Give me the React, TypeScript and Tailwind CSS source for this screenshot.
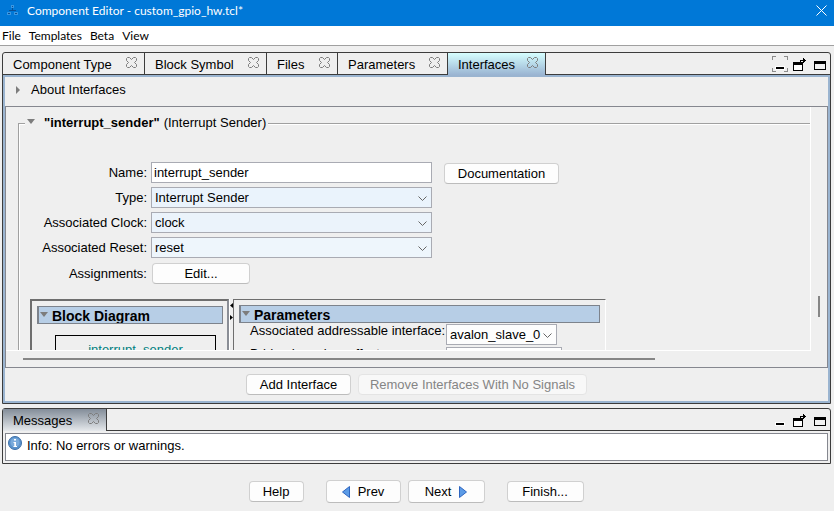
import type { ReactNode } from "react";

function AppIcon() {
  return (
    <svg width="12" height="13" viewBox="0 0 12 13" shapeRendering="crispEdges" aria-hidden="true">
      <path d="M5 5h1v3H5zM2 7h7v1H2z" fill="#0b4f94" />
      <path d="M4 2h3v3H4zM0 9h4v3H0zM7 9h4v3H7z" fill="#3a97e2" />
      <path d="M5 3h1v1H5zM1 10h2v1H1zM8 10h2v1H8z" fill="#0b4f94" />
    </svg>
  );
}

function CloseMark() {
  return (
    <svg width="11" height="11" viewBox="0 0 11 11" fill="none" stroke="#7c7c7c" aria-hidden="true">
      <path d="M1.500.5h2l2 2 2-2h2l1 1v2l-2 2 2 2v2l-1 1h-2l-2-2-2 2h-2l-1-1v-2l2-2-2-2v-2z" />
    </svg>
  );
}

function PanelTools({ focused }: { focused?: boolean }) {
  return (
    <div className="ml-auto flex items-start gap-[5px] pt-[3px] pr-1">
      <button aria-label="Minimize">
        <svg width="16" height="16" viewBox="0 0 16 16" shapeRendering="crispEdges">
          {focused && <path d="M.5 4V.5H4M12 .5h3.500V4M15.500 12v3.500H12M4 15.500H.5V12" fill="none" stroke="#8a8a8a" />}
          <rect x="3" y="10" width="10" height="4" fill="#fff" />
          <rect x="4" y="11" width="8" height="2" fill="#000" />
        </svg>
      </button>
      <button aria-label="Detach">
        <svg width="16" height="16" viewBox="0 0 16 16" shapeRendering="crispEdges">
          <path d="M.5 6.500h9v8h-9z" fill="#fff" stroke="#000" />
          <path d="M0 6h10v3H0zM7 4h4v1H8v2H7zM10 2h1v1h1v1h1v1h-1v1h-1v1h-1z" fill="#000" />
        </svg>
      </button>
      <button aria-label="Maximize">
        <svg width="12" height="16" viewBox="0 0 12 16" shapeRendering="crispEdges">
          <path d="M.5 5.500h11v8H.5z" fill="#f2f2f2" stroke="#000" />
          <path d="M0 5h12v3H0z" fill="#000" />
        </svg>
      </button>
    </div>
  );
}

function Tri() {
  return (
    <svg width="8" height="5" viewBox="0 0 8 5" aria-hidden="true">
      <path d="M0 0h8L4 5z" fill="#7d7d7d" />
    </svg>
  );
}

function Btn({ children, className = "", disabled }: { children: ReactNode; className?: string; disabled?: boolean }) {
  return (
    <button
      disabled={disabled}
      className={`flex shrink-0 items-center justify-center whitespace-nowrap rounded-[4px] border border-[#d0d0d0] border-b-[#bcbcbc] bg-[#fdfdfd] disabled:border-[#e4e4e4] disabled:bg-[#f8f8f8] disabled:text-[#858585] ${className}`}
    >
      {children}
    </button>
  );
}

function Combo({ id, value, className = "" }: { id: string; value: string; className?: string }) {
  return (
    <div className={`relative h-[21px] shrink-0 ${className}`}>
      <select id={id} className="block h-full w-full appearance-none border border-[#a9abb3] bg-transparent pl-[3px] outline-none">
        <option>{value}</option>
      </select>
      <svg className="pointer-events-none absolute top-[9px] right-[5px]" width="9" height="6" viewBox="0 0 9 6" fill="none" stroke="#666">
        <path d="M.5.5l4 4 4-4" />
      </svg>
    </div>
  );
}

function Tab({ children, className }: { children: ReactNode; className: string }) {
  return (
    <button role="tab" className={`flex items-center justify-between border-r border-[#3c3c3c] pr-[7px] pl-[10px] ${className}`}>
      <span className="pt-[2px]">{children}</span>
      <span className="-mt-[2px]">
        <CloseMark />
      </span>
    </button>
  );
}

function SectionHeader({ children }: { children: ReactNode }) {
  return (
    <h3 className="flex h-[18px] items-start overflow-hidden border border-l-2 border-[#7d838c] bg-[#b7cee6] text-sm leading-[18px] font-bold">
      <span className="mt-[5px] ml-px flex w-3">
        <Tri />
      </span>
      {children}
    </h3>
  );
}

function Row({ label, id, children }: { label: string; id: string; children: ReactNode }) {
  return (
    <div className="flex h-[21px] items-center gap-1">
      <label htmlFor={id} className="w-32 shrink-0 text-right">
        {label}
      </label>
      {children}
    </div>
  );
}

export default function App() {
  return (
    <div className="flex h-screen flex-col overflow-hidden bg-[#efefef] font-['Liberation_Sans',Arial,sans-serif] text-[13px] leading-[16px] text-black">
      <header className="flex h-[26px] shrink-0 items-start bg-[#0078d7] pt-[3px] pr-[7px] pl-[7px] font-['Lato','Open_Sans',sans-serif] text-xs leading-4 text-white">
        <AppIcon />
        <h1 className="ml-2">Component Editor - custom_gpio_hw.tcl*</h1>
        <button aria-label="Close" className="mt-[2px] ml-auto">
          <svg width="11" height="11" viewBox="0 0 11 11" stroke="#fff">
            <path d="M.5.5l10 10M10.500.5l-10 10" />
          </svg>
        </button>
      </header>
      <nav className="flex h-5 shrink-0 items-center gap-2 border-b border-[#a0a0a0] bg-white pl-[2px] font-['Lato','Open_Sans',sans-serif] text-xs">
        <button>File</button>
        <button>Templates</button>
        <button>Beta</button>
        <button>View</button>
      </nav>

      <main className="mt-[6px] mr-[3px] ml-[2px] flex min-h-0 flex-1 flex-col rounded-t-[3px] border border-[#3c3c3c]">
        <div role="tablist" className="flex h-[22px] shrink-0 border-b border-[#3c3c3c]">
          <Tab className="w-[142px]">Component Type</Tab>
          <Tab className="w-[122px]">Block Symbol</Tab>
          <Tab className="w-[71px]">Files</Tab>
          <Tab className="w-[110px]">Parameters</Tab>
          <Tab className="-mb-px w-[98px] bg-linear-to-b from-[#d6ffff] to-[#9ab4d2] pb-px">Interfaces</Tab>
          <PanelTools focused />
        </div>
        <div className="flex min-h-0 flex-1 flex-col border-2 border-[#9ab4d0]">
          <button className="flex h-[29px] shrink-0 items-center gap-[11px] pb-1 pl-[11px] text-left">
            <svg width="4" height="8" viewBox="0 0 4 8">
              <path d="M0 0v8l4-4z" fill="#7d7d7d" />
            </svg>
            <span>About Interfaces</span>
          </button>

          <div className="flex min-h-0 flex-1 flex-col border border-[#85878f]">
            <div className="flex min-h-0 flex-1">
              <div className="min-w-0 flex-1 overflow-hidden border-r border-b border-white pt-[7px] pl-3">
                <fieldset className="h-[600px] border-t border-l border-[#a0a0a0] pl-0 shadow-[inset_1px_1px_0_#fff]">
                  <legend className="ml-[6px] flex h-[18px] items-center bg-[#efefef] pr-[2px] pl-[2px]">
                    <span className="-mt-[3px] flex w-[17px]">
                      <Tri />
                    </span>
                    <b className="leading-[18px]">"interrupt_sender"</b>
                    <span className="ml-1">(Interrupt Sender)</span>
                  </legend>

                  <div className="flex flex-col gap-1 pt-[30px]">
                    <Row label="Name:" id="name">
                      <input id="name" defaultValue="interrupt_sender" className="h-[21px] w-[281px] shrink-0 border border-[#a9abb3] bg-white px-[2px] outline-none" />
                      <Btn className="mt-[2px] ml-2 h-[21px] w-[115px]">Documentation</Btn>
                    </Row>
                    <Row label="Type:" id="type">
                      <Combo id="type" value="Interrupt Sender" className="w-[281px] bg-[#eaf3fc]" />
                    </Row>
                    <Row label="Associated Clock:" id="clock">
                      <Combo id="clock" value="clock" className="w-[281px] bg-[#ebf3fb]" />
                    </Row>
                    <Row label="Associated Reset:" id="reset">
                      <Combo id="reset" value="reset" className="w-[281px] bg-[#eef6fc]" />
                    </Row>
                    <div className="mt-px flex h-[21px] items-center gap-[5px]">
                      <span className="w-32 text-right">Assignments:</span>
                      <Btn className="h-[21px] w-[98px]">Edit...</Btn>
                    </div>
                  </div>

                  <div className="mt-[15px] ml-[11px] flex h-[260px]">
                    <section className="w-[199px] shrink-0 border-2 border-t-[#6e6e6e] border-r-[#8a8e96] border-b-white border-l-[#6e6e6e] pt-[5px] pr-1 pl-[5px]">
                      <SectionHeader>Block Diagram</SectionHeader>
                      <div className="mt-[11px] mr-[7px] ml-[18px] h-40 border border-black pt-[6px] text-center text-[#008080]">interrupt_sender</div>
                    </section>
                    <div className="flex w-1 shrink-0 flex-col items-end gap-[7px] border-l border-white pt-1">
                      <svg width="3" height="5" viewBox="0 0 3 5">
                        <path d="M3 0v5L0 2.500z" />
                      </svg>
                      <svg width="3" height="5" viewBox="0 0 3 5">
                        <path d="M0 0v5l3-2.500z" />
                      </svg>
                    </div>
                    <section className="w-[373px] shrink-0 border border-t-[#6e6e6e] border-r-white border-b-white border-l-[#6e6e6e] pt-[5px] pr-[5px] pl-[5px]">
                      <SectionHeader>Parameters</SectionHeader>
                      <div className="mt-px flex flex-col gap-[2px] pl-[11px] leading-[14px]">
                        <div className="flex h-[21px]">
                          <label htmlFor="addressable" className="w-[196px] shrink-0 whitespace-nowrap">
                            Associated addressable interface:
                          </label>
                          <Combo id="addressable" value="avalon_slave_0" className="w-[111px] bg-[#fdfdfd]" />
                        </div>
                        <div className="flex h-[21px]">
                          <label htmlFor="offset" className="w-[196px] shrink-0 whitespace-nowrap">
                            Bridged receiver offset:
                          </label>
                          <input id="offset" className="h-[21px] w-[116px] border border-[#a9abb3] bg-white px-[2px]" />
                        </div>
                      </div>
                    </section>
                  </div>
                </fieldset>
              </div>
              <div className="w-4 shrink-0 pt-[189px] pl-[7px]">
                <div className="h-[21px] w-[2px] bg-[#868686]" />
              </div>
            </div>
            <div className="h-4 shrink-0 pt-[7px] pl-[17px]">
              <div className="h-[2px] w-11/14 bg-[#868686]" />
            </div>
          </div>

          <div className="flex h-[33px] shrink-0 justify-center gap-[7px] pt-[6px]">
            <Btn className="h-[21px] w-[105px]">Add Interface</Btn>
            <Btn disabled className="h-[21px] w-[229px]">
              Remove Interfaces With No Signals
            </Btn>
          </div>
        </div>
      </main>

      <section className="mt-1 mr-[3px] ml-[2px] shrink-0 rounded-t-[3px] border border-[#3c3c3c]">
        <div role="tablist" className="flex h-[22px] border-b border-[#3c3c3c]">
          <Tab className="-mb-px w-[104px] bg-linear-to-b from-[#838d99] to-[#e6e9ec] pb-px">Messages</Tab>
          <PanelTools />
        </div>
        <div className="p-[2px]">
          <div className="flex h-7 items-start gap-[5px] border border-[#85878f] bg-white pt-[2px] pl-[2px]">
            <svg width="14" height="15" viewBox="0 0 14 15">
              <circle cx="7" cy="7" r="6.500" fill="#5b93cc" stroke="#3d6fa8" />
              <circle cx="7" cy="6.500" r="4.500" fill="#7aaadb" />
              <path d="M6 3h2v1.500H6zM5.500 6H8v4h1v1H5.500v-1h.8V7h-.8z" fill="#fff" />
            </svg>
            <p className="pt-[2px]">Info: No errors or warnings.</p>
          </div>
        </div>
      </section>

      <footer className="flex h-[47px] shrink-0 items-start justify-center pt-4 pr-[2px]">
        <Btn className="mt-px mr-[22px] h-[21px] w-[55px]">Help</Btn>
        <Btn className="mr-[7px] h-[23px] w-[75px] gap-2">
          <svg width="8" height="12" viewBox="0 0 8 12">
            <path d="M7.500.5v11L.5 6z" fill="#5b9be6" stroke="#2f66c0" />
          </svg>
          Prev
        </Btn>
        <Btn className="mr-[22px] h-[23px] w-[77px] gap-2">
          Next
          <svg width="8" height="12" viewBox="0 0 8 12">
            <path d="M.5.5v11l7-5.500z" fill="#5b9be6" stroke="#2f66c0" />
          </svg>
        </Btn>
        <Btn className="mt-px h-[21px] w-[77px]">Finish...</Btn>
      </footer>
    </div>
  );
}
